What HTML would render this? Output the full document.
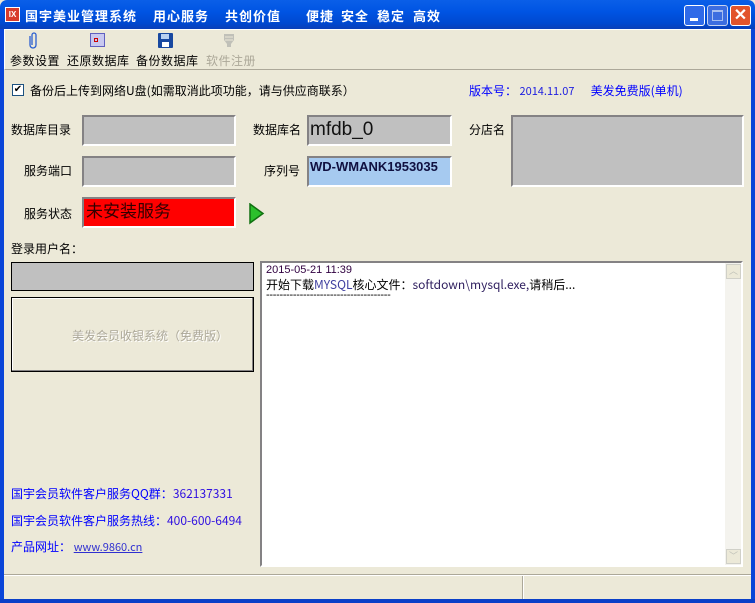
<!DOCTYPE html>
<html><head><meta charset="utf-8"><style>
*{margin:0;padding:0;box-sizing:border-box}
body{width:755px;height:603px;position:relative;overflow:hidden;background:#ece9d8;font-family:"Liberation Sans","Noto Sans CJK SC",sans-serif;font-size:12px;color:#000}
.a{position:absolute;white-space:nowrap}
.box{position:absolute;background:#c0c0c0;border:2px solid;border-color:#848284 #fff #fff #848284}
.cj{font-family:"Noto Sans CJK SC","WenQuanYi Zen Hei",sans-serif}
.t{position:absolute;top:6px;color:#fff;font-weight:bold;font-size:13px;letter-spacing:1px;font-family:"Noto Sans CJK SC","WenQuanYi Zen Hei",sans-serif}
.tb{position:absolute;top:52px;font-family:"Noto Sans CJK SC","WenQuanYi Zen Hei",sans-serif;letter-spacing:0.5px}
</style></head><body>
<div class="a" style="left:0;top:0;width:755px;height:29px;background:linear-gradient(#0a5fe8,#0054e3 40%,#0048d0 80%,#0a3fb8);border-radius:7px 7px 0 0"></div>
<div class="a" style="left:5px;top:7px;width:15px;height:15px;background:#d83c2c;border:1px solid #fff;color:#fff;font-size:8px;font-weight:bold;text-align:center;line-height:13px">IX</div>
<div class="t" style="left:25px">国宇美业管理系统</div>
<div class="t" style="left:153px">用心服务</div>
<div class="t" style="left:225px">共创价值</div>
<div class="t" style="left:306px">便捷</div>
<div class="t" style="left:341px">安全</div>
<div class="t" style="left:377px">稳定</div>
<div class="t" style="left:413px">高效</div>
<div class="a" style="left:684px;top:5px;width:21px;height:21px;background:#2f6ae8;border:1px solid #fff;border-radius:3px"><div class="a" style="left:5px;top:12px;width:8px;height:3px;background:#fff"></div></div>
<div class="a" style="left:707px;top:5px;width:21px;height:21px;background:#3c6de0;border:1px solid #c8d4f0;border-radius:3px"><div class="a" style="left:4px;top:4px;width:11px;height:11px;border:1px solid #a8bff0;border-top-width:2px"></div></div>
<div class="a" style="left:730px;top:5px;width:21px;height:21px;background:#e2542c;border:1px solid #fff;border-radius:3px;color:#fff;font-weight:bold;font-size:16px;line-height:19px;text-align:center">✕</div>
<div class="a" style="left:0;top:29px;width:4px;height:574px;background:#0a45d8"></div>
<div class="a" style="right:0;top:29px;width:4px;height:574px;background:#0a45d8"></div>
<div class="a" style="left:0;top:599px;width:755px;height:4px;background:#0a3fc8"></div>
<div class="a" style="left:4px;top:29px;width:747px;height:41px;border-top:1px solid #fff;border-bottom:1px solid #aca899;border-left:1px solid #fff"></div>
<svg class="a" style="left:28px;top:31px" width="12" height="18"><path d="M4 14V4a2 2 0 014 0v10a3 3 0 01-6 0V5" fill="none" stroke="#2a5fd0" stroke-width="1.3"/></svg>
<div class="a" style="left:90px;top:33px;width:15px;height:14px;background:#c8c8f0;border:1px solid #6060c0"><div class="a" style="left:3px;top:4px;width:4px;height:4px;border:1px solid #c00"></div></div>
<div class="a" style="left:158px;top:33px;width:15px;height:15px;background:#1848a0;border-radius:1px"><div class="a" style="left:3px;top:1px;width:8px;height:5px;background:#b8d0f0"></div><div class="a" style="left:4px;top:9px;width:7px;height:5px;background:#fff"></div></div>
<svg class="a" style="left:221px;top:32px" width="16" height="16"><path d="M3 2h10v6l-3 4H6L3 8Z" fill="#c0c0b8"/><path d="M4 5h8M4 8h8" stroke="#ece9d8" stroke-width="1"/><rect x="6" y="12" width="4" height="3" fill="#c0c0b8"/></svg>
<div class="tb" style="left:10px">参数设置</div>
<div class="tb" style="left:67px">还原数据库</div>
<div class="tb" style="left:136px">备份数据库</div>
<div class="tb" style="left:206px;color:#aca899">软件注册</div>
<div class="a" style="left:12px;top:84px;width:12px;height:12px;background:#fff;border:1px solid #1c5180;font-size:10px;line-height:10px;text-align:center">✔</div>
<div class="a cj" style="left:30px;top:82px">备份后上传到网络U盘(如需取消此项功能，请与供应商联系）</div>
<div class="a cj" style="left:469px;top:82px;color:#00f">版本号：<span style="font-size:11px;color:#2020e0">&nbsp;2014.11.07</span>&nbsp;&nbsp;&nbsp;&nbsp;&nbsp;&nbsp;美发免费版(单机)</div>
<div class="a cj" style="left:11px;top:121px">数据库目录</div>
<div class="box" style="left:82px;top:115px;width:154px;height:31px"></div>
<div class="a cj" style="left:253px;top:121px">数据库名</div>
<div class="box" style="left:307px;top:115px;width:145px;height:31px;font-size:19px;line-height:26px;padding-left:1px;color:#111">mfdb_0</div>
<div class="a cj" style="left:469px;top:121px">分店名</div>
<div class="box" style="left:511px;top:115px;width:233px;height:72px"></div>
<div class="a cj" style="left:24px;top:162px">服务端口</div>
<div class="box" style="left:82px;top:156px;width:154px;height:31px"></div>
<div class="a cj" style="left:264px;top:162px">序列号</div>
<div class="box" style="left:307px;top:156px;width:145px;height:31px;background:#a6caf0;font-weight:bold;font-size:13px;padding:1px 0 0 1px;color:#101040">WD-WMANK1953035</div>
<div class="a cj" style="left:24px;top:205px">服务状态</div>
<div class="box" style="left:82px;top:197px;width:154px;height:31px;background:#f00;font-size:17px;line-height:26px;padding-left:2px;color:#300">未安装服务</div>
<svg class="a" style="left:249px;top:203px" width="16" height="22"><path d="M1 1L14 10.5 1 20Z" fill="#2cc02c" stroke="#107010" stroke-width="1.5"/></svg>
<div class="a cj" style="left:11px;top:240px">登录用户名：</div>
<div class="a" style="left:11px;top:262px;width:243px;height:29px;background:#c0c0c0;border:1px solid #000"></div>
<div class="a" style="left:11px;top:297px;width:243px;height:75px;border:1px solid #000;box-shadow:inset -1px -1px #848284,inset 1px 1px #fff"></div>
<div class="a cj" style="left:72px;top:327px;color:#aca899;text-shadow:1px 1px #fff">美发会员收银系统（免费版）</div>
<div class="a cj" style="left:11px;top:485px;color:#00f">国宇会员软件客户服务QQ群：<span style="color:#3010e0">362137331</span></div>
<div class="a cj" style="left:11px;top:512px;color:#00f">国宇会员软件客户服务热线：<span style="color:#3010e0">400-600-6494</span></div>
<div class="a cj" style="left:11px;top:538px;color:#00f">产品网址：&nbsp;<span style="color:#3030d0;text-decoration:underline;font-size:11px">www.9860.cn</span></div>
<div class="a" style="left:260px;top:261px;width:483px;height:306px;background:#fff;border:2px solid;border-color:#848284 #fff #fff #848284"></div>
<div class="a" style="left:725px;top:263px;width:16px;height:302px;background:#f4f3ee"></div>
<div class="a" style="left:726px;top:264px;width:15px;height:15px;background:#ece9d8;border:1px solid #d0d0c8;color:#c0c0b8;font-size:9px;text-align:center;line-height:13px">︿</div>
<div class="a" style="left:726px;top:549px;width:15px;height:15px;background:#ece9d8;border:1px solid #d0d0c8;color:#c0c0b8;font-size:9px;text-align:center;line-height:13px">﹀</div>
<div class="a" style="left:266px;top:264px;font-size:11px;color:#300040">2015-05-21 11:39</div>
<div class="a cj" style="left:266px;top:276px">开始下载<span style="color:#4040a0">MYSQL</span>核心文件：<span style="color:#302060">softdown\mysql.exe,</span>请稍后...</div>
<div class="a" style="left:266px;top:289px;font-size:11px;line-height:12px;letter-spacing:-0.3px">-------------------------------------</div>
<div class="a" style="left:4px;top:574px;width:747px;height:1px;background:#aca899"></div>
<div class="a" style="left:4px;top:575px;width:747px;height:1px;background:#fff"></div>
<div class="a" style="left:522px;top:576px;width:1px;height:23px;background:#aca899"></div>
<div class="a" style="left:523px;top:576px;width:1px;height:23px;background:#fff"></div>
</body></html>
